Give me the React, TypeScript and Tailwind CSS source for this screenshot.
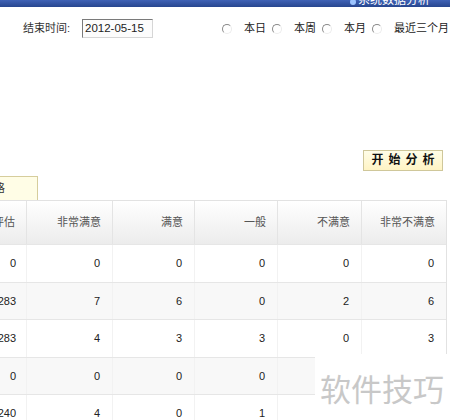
import React from 'react'

const FONT = "font-['Liberation_Sans','Noto_Sans_CJK_SC',sans-serif]"

const HEADERS = ['评估', '非常满意', '满意', '一般', '不满意', '非常不满意']
const COL_WIDTHS = ['w-[84px]', 'w-[86px]', 'w-[82px]', 'w-[83px]', 'w-[84px]', 'w-[84px]']
const COL_PAD = ['pr-[10px]', 'pr-[12px]', 'pr-[12px]', 'pr-[12px]', 'pr-[12px]', 'pr-[12px]']

const ROWS = [
  ['0', '0', '0', '0', '0', '0'],
  ['283', '7', '6', '0', '2', '6'],
  ['283', '4', '3', '3', '0', '3'],
  ['0', '0', '0', '0', '', ''],
  ['240', '4', '0', '1', '', ''],
]

const RANGES = ['本日', '本周', '本月', '最近三个月']

function Radio() {
  return (
    <span className="shrink-0 inline-block w-[10px] h-[10px] rounded-full border border-t-[#8a8a8a] border-l-[#8a8a8a] border-b-[#ececec] border-r-[#ececec] bg-white" />
  )
}

export default function App() {
  return (
    <div className={`relative w-[450px] h-[420px] overflow-hidden bg-white text-[11px] text-[#333] whitespace-nowrap ${FONT}`}>
      {/* title bar, only its lower edge shows */}
      <div className="h-[7px] overflow-hidden bg-gradient-to-b from-[#3f62b5] to-[#27468f] flex justify-end pr-[20px]">
        <div className="flex items-center gap-[2px] -mt-[7px] text-white text-[12px] leading-[14px]">
          <span className="w-[6px] h-[6px] rounded-full bg-[#9cc4ff] mt-[4px]" />
          <span>系统数据分析</span>
        </div>
      </div>

      {/* date filter */}
      <div className="flex items-center h-[19px] mt-[12px] pl-[23px]">
        <span className="shrink-0 w-[59px] text-[#333]">结束时间:</span>
        <div className="shrink-0 w-[71px] h-[19px] border border-t-[#7a7a7a] border-l-[#7a7a7a] border-b-[#d6d6d6] border-r-[#d6d6d6] bg-[#fcfcfc] pl-[2px] leading-[17px] text-[11.5px] text-[#222] overflow-hidden">
          2012-05-15
        </div>
        <div className="flex items-center ml-[69px] shrink-0">
          {RANGES.map(r => (
            <div key={r} className="flex items-center mr-[6px] shrink-0">
              <Radio />
              <span className="ml-[12px] text-[#222]">{r}</span>
            </div>
          ))}
        </div>
      </div>

      {/* action */}
      <div className="flex justify-end pr-[7px] mt-[112px]">
        <button className="w-[80px] h-[21px] border border-[#cfc79a] bg-gradient-to-b from-[#fffde8] to-[#fff4c4] text-[12px] font-semibold text-[#111] tracking-[5px] pl-[5px] leading-[19px]">
          开始分析
        </button>
      </div>

      {/* tab */}
      <div className="mt-[5px] h-[24px] -ml-[62px] w-[100px] border border-b-0 border-[#d6cd9c] bg-[#fffde6] flex items-center justify-end pr-[32px] text-[#333]">
        统计表格
      </div>

      {/* table */}
      <div className="-ml-[57px] w-[504px] border-t border-r border-[#e2e2e2]">
        <div className="flex h-[43px] bg-gradient-to-b from-white to-[#ececec]">
          {HEADERS.map((h, i) => (
            <div
              key={h}
              className={`${COL_WIDTHS[i]} shrink-0 flex items-center justify-end pr-[11px] border-r border-[#e4e4e4] last:border-r-0 text-[#555]`}
            >
              {h}
            </div>
          ))}
        </div>
        {ROWS.map((row, ri) => (
          <div
            key={ri}
            className={`flex h-[37.5px] border-t border-[#e6e6e6] ${ri % 2 === 1 ? 'bg-[#f8f8f8]' : 'bg-white'}`}
          >
            {row.map((v, ci) => (
              <div
                key={ci}
                className={`${COL_WIDTHS[ci]} ${COL_PAD[ci]} shrink-0 flex items-center justify-end border-r border-[#f2f2f2] last:border-r-0 text-[#222]`}
              >
                {v}
              </div>
            ))}
          </div>
        ))}
      </div>

      {/* watermark */}
      <div className="absolute left-[315px] top-[354px] w-[135px] h-[66px] bg-white flex items-center pl-[5px]">
        <span className="text-[31px] text-[#c8c8c8] font-['Noto_Sans_CJK_SC',sans-serif] leading-none">软件技巧</span>
      </div>
    </div>
  )
}
